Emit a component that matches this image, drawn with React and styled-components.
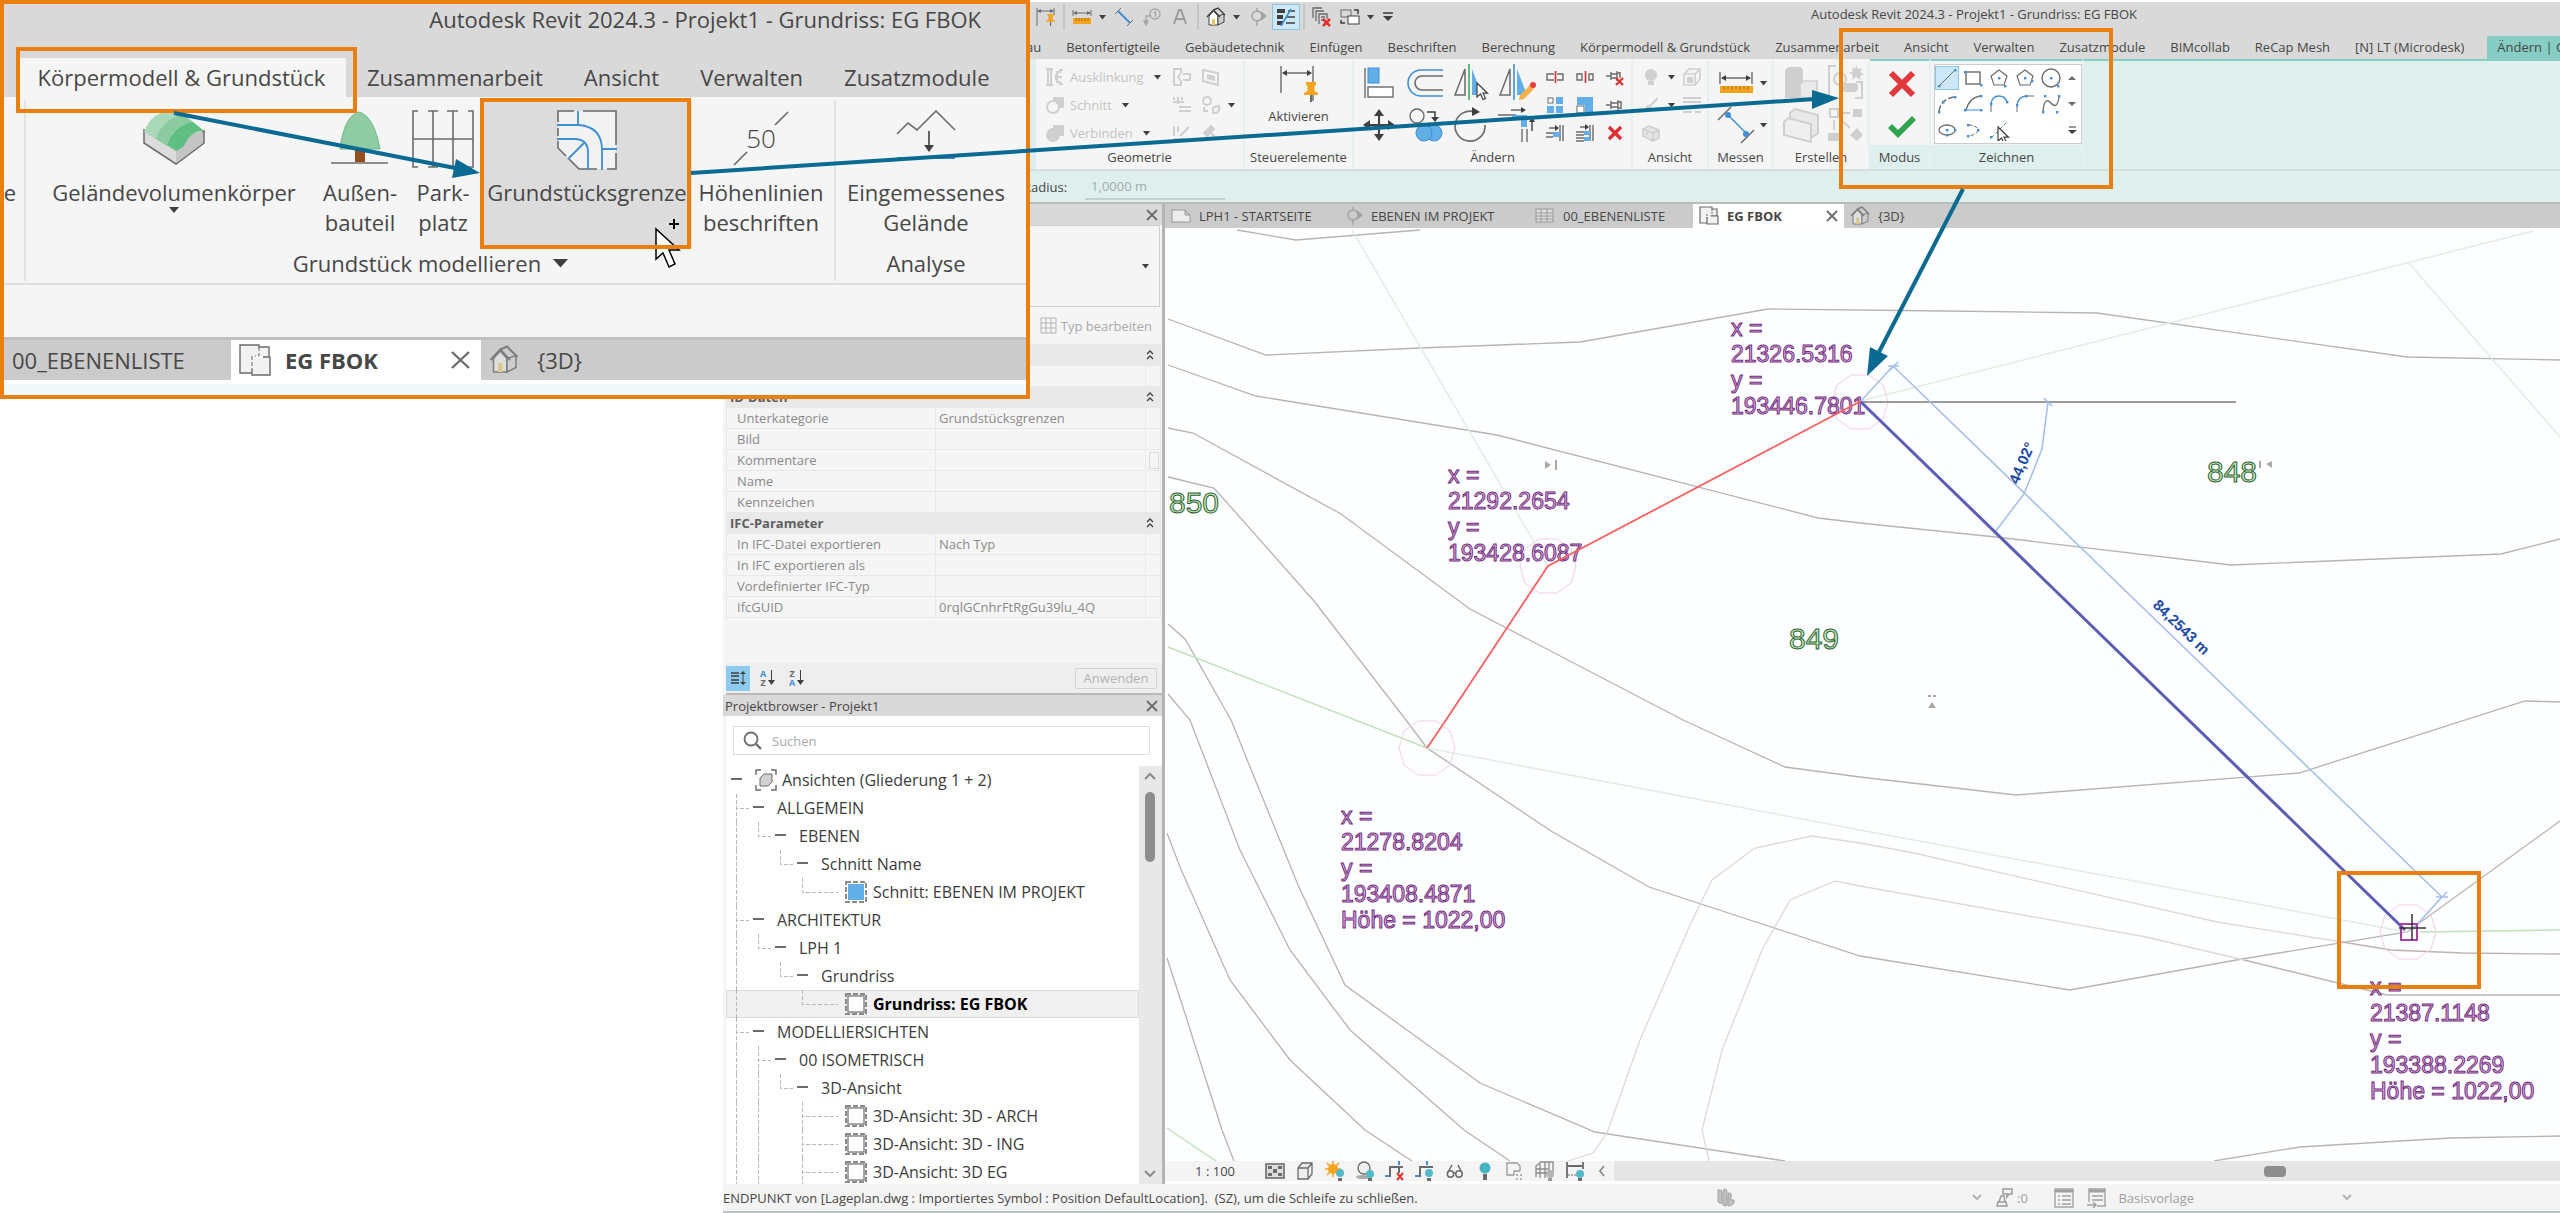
import styled, {createGlobalStyle, css} from 'styled-components';
import {useState} from 'react';

const theme = {
  orange: '#ea7f10',
  arrow: '#0b6a91',
  bar: '#d9d9d9',
  panel: '#f5f5f5',
  mint: '#dfefed',
  teal: '#86cdc3',
  text: '#474747',
  muted: '#8a8a8a',
  blue: '#3f8fd6',
  fill: '#62aee6',
};

const GlobalStyle = createGlobalStyle`
  * {
    box-sizing: border-box;
  }

  body {
    margin: 0;
    background: white;
    overflow: hidden;
    font-family: 'Open Sans', 'Noto Sans', sans-serif;
    font-size: 13px;
    color: ${theme.text};
  }

  button, input, select {
    font: inherit;
    color: inherit;
    border: none;
    background: none;
    padding: 0;
    margin: 0;
  }
`;

/* ---------- icons ---------- */

const g = '#6b6b6b';
const k = '#3f3f3f';
const f = '#cfcfcf';
const b = theme.blue;
const bf = theme.fill;

const Pin = ({x, y}) => (
  <g transform={`translate(${x} ${y})`}>
    <path d="M1 0H11V3L9.500 4V9L13 11V13H-1V11L2.500 9V4L1 3Z" fill="#f4a31c"/>
    <path d="M6 13V20" stroke={g} strokeWidth="2"/>
  </g>
);

const Dot = ({x, y}) => <rect x={x - 1} y={y - 1} width="2.400" height="2.400" fill={b}/>;

const Cursor = ({x, y}) => (
  <path transform={`translate(${x} ${y})`} d="M0 0V14L3.500 11L6 16.500L8.500 15.500L6 10.200H10.500Z" fill="white" stroke={k} strokeWidth="1.200"/>
);

const icons = {
  pinDim: [20, 20, <><path d="M1 1V19M18 1V8M2 4H17" stroke={g} fill="none"/><path d="M1 4L5 2V6ZM18 4L14 2V6Z" fill={g}/><g transform="translate(11 7) scale(.6)"><Pin x={0} y={0}/></g></>],
  ruler: [20, 16, <><path d="M1 1V7M19 1V7M2 4H18" stroke={g} fill="none"/><path d="M1 4L5 2V6ZM19 4L15 2V6Z" fill={g}/><rect x="1" y="9" width="18" height="6" fill="#f4a31c"/><path d="M4 9V12M7 9V12M10 9V12M13 9V12M16 9V12" stroke="#a8690c"/></>],
  diag: [20, 20, <><path d="M1 7L7 1M13 19L19 13" stroke={g}/><path d="M4 4L16 16" stroke={b} strokeWidth="2"/></>],
  tag: [18, 18, <g fill="none" stroke="#a6a6a6" strokeWidth="1.300"><circle cx="12" cy="6" r="5"/><path d="M11 5L12.500 4V9M7 8H3V13"/><path d="M1 13H5L3 17Z" fill="#a6a6a6"/></g>],
  letter: [16, 16, <path d="M2 15L7 1H9L14 15M4 10H12" fill="none" stroke="#9b9b9b" strokeWidth="2"/>],
  house: [20, 20, <><path d="M3 9V18H12V9L7.500 4Z" fill="white" stroke={k}/><path d="M12 18L18 15V7L12 9Z" fill="#cfcfcf" stroke={k}/><path d="M1 10L7.500 3L14 10M7.500 3L12 1L19 8" fill="none" stroke={k} strokeWidth="1.400"/><rect x="6" y="12" width="3" height="6" fill="#e9c75b"/></>],
  houseGrey: [20, 20, <g opacity=".55"><path d="M3 9V18H12V9L7.500 4Z" fill="#eee" stroke={k}/><path d="M12 18L18 15V7L12 9Z" fill="#cfcfcf" stroke={k}/><path d="M1 10L7.500 3L14 10M7.500 3L12 1L19 8" fill="none" stroke={k} strokeWidth="1.400"/><rect x="6" y="12" width="3" height="6" fill="#e9c75b"/></g>],
  section: [18, 18, <g fill="none" stroke="#a0a0a0" strokeWidth="1.300"><circle cx="8" cy="8" r="5"/><path d="M8 0V3M8 13V18"/><path d="M12 4L17 8L12 12" fill="#a0a0a0"/></g>],
  thinLines: [20, 18, <><path d="M1 3H9M1 9H7M1 15H7" stroke={k} strokeWidth="4"/><path d="M12 3H19M11 9H19M10 15H19" stroke={k} strokeWidth="1.400"/><path d="M5 18L15 1" stroke={b} strokeWidth="1.600"/></>],
  closeViews: [20, 20, <><path d="M1 11V1H10M4 14V4H12M7 17V7H15V12M9 10H13M9 13H11" fill="none" stroke={g} strokeWidth="1.300"/><path d="M11 12L18 19M18 12L11 19" stroke="#e03131" strokeWidth="2.600"/></>],
  switchViews: [20, 18, <><rect x="1" y="2" width="10" height="7" fill="none" stroke={g}/><rect x="8" y="8" width="11" height="8" fill="white" stroke={k}/><path d="M14 2H18V6M1 12V15H5" fill="none" stroke={k} strokeWidth="1.500"/></>],
  cope: [20, 18, <path d="M1 1H8M1 17H8M3 1V17M6 1V17M18 2H15V4H12V7H10M18 16H15V14H12V11H10M10 9H17" fill="none" stroke={f} strokeWidth="2"/>],
  cut: [20, 18, <><rect x="8" y="1" width="11" height="11" fill={f}/><circle cx="8" cy="11" r="6" fill={theme.panel} stroke={f} strokeWidth="2"/></>],
  join: [20, 18, <><rect x="8" y="1" width="11" height="11" fill={f}/><circle cx="8" cy="11" r="7" fill={f}/></>],
  joinWall: [20, 18, <path d="M2 1H9V5L6 9L9 13V17H2ZM11 6H18V12H11" fill="none" stroke={f} strokeWidth="2"/>],
  face: [20, 18, <><path d="M2 2L17 5V17L2 13Z" fill="none" stroke={f} strokeWidth="2"/><path d="M6 6L14 8V13L6 11Z" fill={f}/></>],
  beam: [20, 18, <path d="M2 1V4M6 1V8M10 1V4M1 6H12M7 11H19M7 15H19" fill="none" stroke={f} strokeWidth="2"/>],
  split: [20, 18, <g fill="none" stroke={f} strokeWidth="2"><circle cx="6" cy="5" r="4"/><path d="M3 11V15H7M12 17V12Q14 10 18 10Q19 16 15 17Z"/></g>],
  paint: [20, 18, <path d="M2 2V12M6 2V8M2 15H14M8 12L17 3" fill="none" stroke={f} strokeWidth="2"/>],
  hammer: [20, 18, <path d="M3 9L10 2L13 5L6 12ZM9 8L17 16" fill={f} stroke={f} strokeWidth="2"/>],
  activate: [38, 38, <><path d="M1 1V28M33 1V36M3 8H31" stroke={g} fill="none" strokeWidth="1.400"/><path d="M2 8L7 5V11ZM32 8L27 5V11Z" fill={k}/><Pin x={25} y={17}/></>],
  align: [32, 32, <><path d="M2 1V31" stroke={g} strokeWidth="1.400"/><rect x="5" y="1" width="11" height="15" fill={bf} stroke={b}/><rect x="5" y="20" width="25" height="10" fill="white" stroke={g} strokeWidth="1.400"/></>],
  offset: [38, 32, <><path d="M37 3H15A13 13 0 0 0 15 29H37" fill="none" stroke={b} strokeWidth="1.600"/><path d="M37 9H16A7 7 0 0 0 16 23H37" fill="none" stroke={g} strokeWidth="1.600"/></>],
  mirrorPick: [36, 38, <><path d="M2 31L12 5V31Z" fill="none" stroke={g} strokeWidth="1.500"/><path d="M19 5L29 31H19Z" fill={bf}/><path d="M16 0V36" stroke="#3daf5b" strokeWidth="1.600"/><Cursor x={24} y={19}/></>],
  mirrorDraw: [38, 38, <><path d="M2 31L12 5V31Z" fill="none" stroke={g} strokeWidth="1.500"/><path d="M19 5L29 31H19Z" fill={bf}/><path d="M16 0V36" stroke={b} strokeWidth="1.600"/><path d="M22 31L32 21L36 25L26 35L21 36Z" fill="#f3b04b"/><circle cx="35" cy="21" r="3" fill="#e23b3b"/></>],
  move: [32, 32, <><path d="M3 16H29M16 3V29" stroke={k} strokeWidth="2"/><path d="M16 0L21 7H11ZM16 32L21 25H11ZM0 16L7 11V21ZM32 16L25 11V21Z" fill={k}/></>],
  copy: [36, 34, <><circle cx="10" cy="8" r="7" fill="none" stroke={g} strokeWidth="1.400"/><path d="M20 4H28V10" fill="none" stroke={k} strokeWidth="1.500"/><path d="M24 9H32L28 14Z" fill={k}/><circle cx="27" cy="25" r="8" fill={bf} stroke={b}/><circle cx="17" cy="25" r="8" fill={bf} stroke={b}/></>],
  rotate: [36, 36, <><path d="M22 5A15 15 0 1 0 32 18" fill="none" stroke={g} strokeWidth="1.600"/><path d="M19 0L27 5L19 9Z" fill={k}/></>],
  trim: [38, 36, <><path d="M0 8H18M13 3H25" stroke={g} strokeWidth="1.400"/><path d="M14 8H29V20H23V12H14Z" fill={bf}/><path d="M24 22V35M29 22V35" stroke={g} strokeWidth="1.400"/><path d="M23 0L28 3L23 6Z" fill={k}/><path d="M34 24V12" stroke={k} strokeWidth="1.400"/><path d="M31 15L34 10L37 15Z" fill={k}/></>],
  splitEl: [20, 18, <><path d="M9 6H2V12H9M12 6H18V12H12" fill="none" stroke={g} strokeWidth="1.400"/><path d="M10.500 3V15" stroke="#e03131" strokeWidth="1.600"/></>],
  splitGap: [20, 18, <><path d="M2 6H7V12H2ZM14 6H18V12H14Z" fill="none" stroke={g} strokeWidth="1.400"/><path d="M10.500 3V15" stroke="#e03131" strokeWidth="1.600"/></>],
  unpin: [20, 18, <><path d="M1 8H6M6 4V12M6 6H12M6 10H12M12 3V13M15 4V10M12 5H15" fill="none" stroke={g} strokeWidth="1.400"/><path d="M11 10L18 17M18 10L11 17" stroke="#e03131" strokeWidth="2.200"/></>],
  array: [18, 18, <><rect x="2" y="2" width="5" height="5" fill="white" stroke={g}/><path d="M10 1H17V8H10ZM1 10H8V17H1ZM10 10H17V17H10Z" fill={bf}/></>],
  scale: [18, 18, <><path d="M1 1H17V17H9V9H1Z" fill={bf}/><rect x="1" y="10" width="7" height="7" fill="white" stroke={g}/></>],
  pin: [20, 18, <path d="M1 9H6M6 5V13M6 7H13M6 11H13M13 4V14M16 5V13M13 6H16M13 12H16" fill="none" stroke={g} strokeWidth="1.400"/>],
  trimOne: [20, 18, <><path d="M15 1V17M18 1V17M1 9H8M1 13H8M4 4H12" stroke={g} strokeWidth="1.400"/><rect x="8" y="8" width="7" height="5" fill={bf}/><path d="M10 1L14 4L10 7Z" fill={k}/></>],
  trimMany: [20, 18, <><path d="M15 1V17M18 1V17M1 8H9M1 11H9M1 14H9M1 17H9M5 3H12" stroke={g} strokeWidth="1.400"/><path d="M9 7H15V11H9ZM9 13H15V17H9Z" fill={bf}/><path d="M10 0L14 3L10 6Z" fill={k}/></>],
  remove: [18, 18, <path d="M3 3L15 15M15 3L3 15" stroke="#df2f36" strokeWidth="3.400"/>],
  bulb: [18, 18, <><circle cx="9" cy="7" r="6" fill={f}/><rect x="6" y="13" width="6" height="4" fill={f}/></>],
  box: [20, 18, <><path d="M2 6L7 1H18V11L13 17H2ZM2 6H13V17M13 6L18 1" fill="none" stroke={f} strokeWidth="1.600"/><rect x="5" y="9" width="6" height="6" fill={f}/></>],
  brush: [18, 18, <><path d="M16 2L8 10" stroke={f} strokeWidth="2"/><path d="M2 15L6 8L10 12Z" fill={f}/></>],
  lines: [20, 18, <path d="M1 2H19M1 6H19M1 11H19M1 16H10M13 16H19" stroke={f} strokeWidth="2"/>],
  brick: [20, 18, <path d="M2 5L8 2L18 6V14L12 17L2 12ZM2 5L12 9V17M12 9L18 6M6 8V11" fill="#e4e4e4" stroke={f} strokeWidth="1.600"/>],
  measure: [36, 22, <><path d="M2 0V12M34 0V12M4 6H32" stroke={g} strokeWidth="1.400"/><path d="M3 6L8 3V9ZM33 6L28 3V9Z" fill={k}/><rect x="2" y="14" width="33" height="7" fill="#f4a31c"/><path d="M6 14V18M10 14V17M14 14V18M18 14V17M22 14V18M26 14V17M30 14V18" stroke="#a8690c"/></>],
  dimension: [38, 38, <><path d="M1 14L14 1M24 37L37 24" stroke={g} strokeWidth="1.500"/><path d="M11 9L30 28" stroke={b} strokeWidth="1.500"/><circle cx="11" cy="9" r="3" fill={b}/><circle cx="29" cy="28" r="3" fill={b}/></>],
  group: [36, 34, <><path d="M2 4L6 1H18L20 4V32H2Z" fill={f}/><path d="M17 18L20 15H34V28L30 32H17Z" fill="#e9e9e9" stroke={f} strokeWidth="1.600"/></>],
  assembly: [38, 36, <><path d="M8 12V6L13 2L36 8V26L31 30Z" fill="#e9e9e9" stroke={f} strokeWidth="2"/><path d="M2 15L6 11L29 17V35L2 28Z" fill="#efefef" stroke={f} strokeWidth="2"/></>],
  part: [36, 36, <><path d="M8 1H1V33H8M28 17H34V33H27" fill="none" stroke={f} strokeWidth="2"/><circle cx="12" cy="14" r="6" fill="none" stroke={f} strokeWidth="2"/><rect x="14" y="18" width="16" height="9" rx="4" fill={f}/><path d="M28 0L30 4L34 3L32 7L36 9L32 11L33 15L28 12L24 15L25 10L21 8L25 6L24 2L27 4Z" fill={f}/></>],
  similar: [36, 34, <><path d="M2 1H10V9H2Z" fill="none" stroke={f} strokeWidth="2"/><path d="M25 1H34V9H25ZM0 25H12V33H0ZM29 20L35 27L29 33L22 27Z" fill={f}/><path d="M13 5H22M6 12V22M13 12L22 20" stroke={f} strokeWidth="2"/></>],
  cancel: [30, 30, <path d="M4 4L26 26M26 4L4 26" stroke="#e2373b" strokeWidth="6"/>],
  finish: [30, 24, <path d="M3 12L11 20L27 4" fill="none" stroke="#2da44e" strokeWidth="5.500"/>],
  gLine: [22, 22, <><path d="M4 18L18 4" stroke={g}/><Dot x={3} y={19}/><Dot x={19} y={3}/></>],
  gRect: [22, 22, <><rect x="4" y="5" width="14" height="12" fill="none" stroke={g} strokeWidth="1.400"/><Dot x={3} y={5}/><Dot x={19} y={18}/></>],
  gPoly: [22, 22, <><path d="M11 3L19 9L16 18H6L3 9Z" fill="none" stroke={g} strokeWidth="1.200"/><Dot x={11} y={11}/><Dot x={17} y={19}/></>],
  gPolyOut: [22, 22, <><path d="M11 3L19 9L16 18H6L3 9Z" fill="none" stroke={g} strokeWidth="1.200"/><Dot x={11} y={11}/><Dot x={18} y={14}/></>],
  gCircle: [22, 22, <><circle cx="11" cy="11" r="9" fill="none" stroke={g} strokeWidth="1.400"/><Dot x={11} y={11}/><Dot x={18} y={19}/></>],
  gArc1: [22, 22, <><path d="M3 18Q5 6 18 4" fill="none" stroke={g} strokeWidth="1.400" strokeDasharray="6 2"/><Dot x={3} y={19}/><Dot x={7} y={9}/><Dot x={19} y={4}/></>],
  gArc2: [22, 22, <><path d="M4 17Q7 5 18 3" fill="none" stroke={g} strokeWidth="1.400"/><path d="M4 17H18" stroke={b}/><Dot x={3} y={17}/><Dot x={19} y={3}/><Dot x={19} y={17}/></>],
  gArc3: [22, 22, <><path d="M3 19V11" stroke={g}/><path d="M3 11Q4 3 11 3Q17 3 19 9" fill="none" stroke={b} strokeWidth="1.400"/><Dot x={3} y={11}/><Dot x={19} y={9}/></>],
  gArc4: [22, 22, <><path d="M3 19V12M12 3H20" stroke={g}/><path d="M3 12Q4 4 12 3" fill="none" stroke={b} strokeWidth="1.400"/><Dot x={3} y={12}/><Dot x={12} y={3}/></>],
  gSpline: [22, 22, <><path d="M3 19Q4 4 10 9Q17 18 19 4" fill="none" stroke={g} strokeWidth="1.300"/><Dot x={3} y={19}/><Dot x={5} y={3}/><Dot x={19} y={3}/><Dot x={17} y={19}/></>],
  gEllipse: [22, 22, <><ellipse cx="11" cy="11" rx="8" ry="5" fill="none" stroke={g} strokeWidth="1.300"/><Dot x={11} y={11}/><Dot x={19} y={11}/><Dot x={11} y={16}/></>],
  gHalf: [22, 22, <><path d="M6 6Q15 6 16 11Q15 16 6 17" fill="none" stroke={g} strokeDasharray="4 2"/><Dot x={6} y={6}/><Dot x={16} y={11}/><Dot x={6} y={17}/></>],
  gPick: [22, 22, <><path d="M3 19L19 3" stroke="#3daf5b" strokeDasharray="4 2"/><Dot x={3} y={18}/><Cursor x={10} y={8}/></>],
  galUp: [10, 6, <path d="M1 5L5 1L9 5Z" fill={g}/>],
  galDown: [10, 6, <path d="M1 1L5 5L9 1Z" fill={g}/>],
  galMore: [10, 9, <><path d="M2 1H9" stroke={g} strokeWidth="1.400"/><path d="M1 4H10L5 8Z" fill={k}/></>],
  drop: [8, 5, <path d="M0 0H7L3.500 4.500Z" fill={k}/>],
  dropMid: [10, 6, <path d="M0 0H10L5 6Z" fill={k}/>],
  dropBig: [16, 9, <path d="M0 0H15L7.500 8.500Z" fill={k}/>],
  more: [12, 10, <><path d="M1 1H11" stroke={k} strokeWidth="1.600"/><path d="M1 4H11L6 9Z" fill={k}/></>],
  sheet: [20, 14, <path d="M1 1H14L19 6V13H1ZM14 1V6H19" fill="#ededed" stroke="#9a9a9a"/>],
  schedule: [20, 16, <><rect x="1" y="1" width="17" height="13" fill="#ddd" stroke="#9a9a9a"/><path d="M1 5H18M1 8H18M1 11H18M6 1V14M12 1V14" stroke="#9a9a9a"/></>],
  plan: [20, 20, <><path d="M1 1H13V3H18V10H12V17H1Z" fill="#f2f2f2" stroke={g} strokeWidth="1.200"/><path d="M8 11V18H19V10H12" fill="#f2f2f2" stroke={g} strokeWidth="1.200"/><path d="M13 3V9M8 8V12" stroke={g} strokeDasharray="2 1"/></>],
  planBig: [32, 32, <><path d="M1 1H20V3H30V12H16V29H1Z" fill="#f2f2f2"/><path d="M13 14H31V31H13Z" fill="#f2f2f2"/><path d="M13 29H1V1H20V3H30V12M24 13H31V31H13V25" fill="none" stroke={g} strokeWidth="1.400"/><path d="M20 3V12H16M13 12V25" fill="none" stroke={g} strokeDasharray="4 2"/></>],
  close: [12, 12, <path d="M1 1L11 11M11 1L1 11" stroke={g} strokeWidth="1.800"/>],
  closeBig: [20, 18, <path d="M1 1L18 17M18 1L1 17" stroke={g} strokeWidth="2.400"/>],
  typeEdit: [18, 18, <path d="M1 1H16V16H1ZM1 6H16M1 11H16M6 1V16M11 1V16" fill="none" stroke="#b5b5b5"/>],
  chevrons: [8, 12, <path d="M1 5L4 2L7 5M1 10L4 7L7 10" fill="none" stroke={k} strokeWidth="1.300"/>],
  sortGroup: [16, 16, <><path d="M1 3H9M1 6H9M1 10H9M1 13H9" stroke={k} strokeWidth="1.300"/><path d="M13 2V14" stroke={k}/><path d="M10 4L13 1L16 4ZM10 12L13 15L16 12Z" fill={k}/></>],
  search: [20, 20, <><circle cx="8" cy="8" r="6.500" fill="none" stroke={g} strokeWidth="1.800"/><path d="M13 13L18 18" stroke={g} strokeWidth="2.400"/></>],
  views: [22, 22, <><path d="M1 6V1H6M16 1H21V6M21 16V21H16M6 21H1V16" fill="none" stroke={g} strokeWidth="1.400"/><path d="M5 9L9 5H17V13L13 17H5Z" fill="#d0d0d0" stroke={g}/></>],
  viewBox: [24, 24, <><rect x="2" y="2" width="20" height="20" fill="none" stroke="#8a8a8a" strokeWidth="2" strokeDasharray="5 2"/><rect x="4" y="4" width="16" height="16" fill="white" stroke="#8a8a8a" strokeWidth="1.500"/></>],
  viewBlue: [24, 24, <><rect x="2" y="2" width="20" height="20" fill="none" stroke="#8a8a8a" strokeWidth="2" strokeDasharray="5 2"/><rect x="4" y="4" width="16" height="16" fill={bf}/></>],
  detail: [20, 16, <><rect x="1" y="1" width="18" height="14" fill="#ddd" stroke={g} strokeWidth="1.600"/><path d="M3 3H7V6H3ZM13 3H17V6H13ZM3 10H7V13H3ZM13 10H17V13H13ZM8 6H12V10H8Z" fill={g}/></>],
  style: [18, 18, <path d="M2 6L6 1H16V12L12 17H2ZM2 6H12V17M12 6L16 1" fill="#eee" stroke={g} strokeWidth="1.300"/>],
  sun: [20, 20, <><path d="M8 0V16M0 8H16M2 2L14 14M14 2L2 14" stroke="#f4a31c" strokeWidth="1.500"/><circle cx="8" cy="8" r="5" fill="#f4a31c"/><circle cx="15" cy="12" r="4" fill="#52b9c9"/><path d="M13 17H17V20H13Z" fill={g}/></>],
  shadow: [20, 20, <><circle cx="9" cy="7" r="6" fill="#eee" stroke={g} strokeWidth="1.300"/><ellipse cx="8" cy="16" rx="7" ry="2" fill="#aaa"/><circle cx="15" cy="13" r="4" fill="#52b9c9"/><path d="M13 17H17V20H13Z" fill={g}/></>],
  cropOff: [20, 20, <><path d="M0 15H4M14 0V4" stroke={b} strokeWidth="2"/><path d="M5 16V6H18M14 6V12" fill="none" stroke={g} strokeWidth="2"/><path d="M12 12L18 19M18 12L12 19" stroke="#e03131" strokeWidth="2"/></>],
  crop: [20, 20, <><path d="M0 15H4M12 0V4" stroke={b} strokeWidth="2"/><path d="M5 16V6H18" fill="none" stroke={g} strokeWidth="2"/><circle cx="14" cy="12" r="4" fill="#52b9c9"/><path d="M12 17H16V20H12Z" fill={g}/></>],
  glasses: [18, 18, <g fill="none" stroke={g} strokeWidth="1.500"><circle cx="4.500" cy="12" r="3.200"/><circle cx="13" cy="12" r="3.200"/><path d="M1.500 11L6 3M16 11L12 3M8 11H10"/></g>],
  reveal: [14, 20, <><circle cx="7" cy="7" r="5.500" fill="#45b2c5"/><path d="M5 13H9V19H5Z" fill={g}/></>],
  temp: [18, 18, <><path d="M8 13H1V1H11L14 4V9M8 13V9H14" fill="none" stroke="#9a9a9a" strokeWidth="1.300"/><path d="M10 13H17M10 17H17" stroke="#9a9a9a" strokeWidth="1.500" strokeDasharray="2 2"/></>],
  analytic: [20, 20, <><path d="M1 16V5L6 1H18V12M1 8H13M1 12H13M5 3V17M10 1V17M14 2V12" fill="none" stroke="#8a8a8a" strokeWidth="1.300"/><circle cx="15" cy="13" r="4" fill="#b4b4b4"/><path d="M13 17H17V20H13Z" fill="#9a9a9a"/></>],
  constraint: [20, 20, <><path d="M2 1V17M18 1V8M3 5H17" stroke={g} strokeWidth="1.800"/><path d="M3 14H11" stroke={g} strokeDasharray="2 1"/><circle cx="15" cy="13" r="4" fill="#52b9c9"/><path d="M13 17H17V20H13Z" fill={g}/></>],
  left: [8, 12, <path d="M6 1L2 6L6 11" fill="none" stroke="#8a8a8a" strokeWidth="1.800"/>],
  arrowUp: [14, 9, <path d="M2 7L7 2L12 7" fill="none" stroke="#8a8a8a" strokeWidth="2"/>],
  arrowDown: [14, 9, <path d="M2 2L7 7L12 2" fill="none" stroke="#8a8a8a" strokeWidth="2"/>],
  chevron: [10, 7, <path d="M1 1L5 5L9 1" fill="none" stroke="#b4b4b4" strokeWidth="2"/>],
  hand: [20, 20, <path d="M3 2H5Q7 2 7 4V15Q5 16 3 14ZM8 4Q8 1 10 1Q12 1 12 4V17Q10 19 8 17ZM13 7Q13 4 15 5Q17 5 16 9V12H19V15Q17 18 13 18Z" fill="#c2c2c2" stroke="#a2a2a2"/>],
  press: [18, 20, <path d="M7 1H16V6H13L11 9V6H7ZM1 18H11L10 14H2ZM3 14L5 8H8L9 14" fill="none" stroke="#9b9b9b" strokeWidth="1.500"/>],
  list: [20, 20, <><rect x="1" y="1" width="18" height="18" fill="none" stroke="#a0a0a0" strokeWidth="1.400"/><path d="M1 3H19" stroke="#a0a0a0" strokeWidth="3"/><path d="M4 8H6M8 8H17M4 12H6M8 12H17M4 16H6M8 16H17" stroke="#a0a0a0" strokeWidth="1.500"/></>],
  listPin: [20, 20, <><path d="M3 14V1H19V18H11" fill="none" stroke="#a0a0a0" strokeWidth="1.400"/><path d="M3 3H19" stroke="#a0a0a0" strokeWidth="3"/><path d="M6 8H17M6 12H17M1 17H9M7 14L10 17L7 20" fill="none" stroke="#a0a0a0" strokeWidth="1.500"/></>],
  toposolid: [62, 56, <>
    <path d="M1 20L1 33L33 54L61 33V21L33 40Z" fill="#dcdcdc" stroke={g} strokeWidth="1.500"/>
    <path d="M33 53V40Q38 40 43 31Q48 21 60 22V33Z" fill="#c4c4c4"/>
    <path d="M1 22Q8 2 28 1Q34 0 40 4L61 21Q48 20 41 34Q37 41 33 41Z" fill="#a9d9b8"/>
    <path d="M13 29Q20 8 40 5L50 12Q30 14 24 36Z" fill="#8ccba0"/>
    <path d="M24 35Q32 14 50 12L61 21Q48 20 41 36L34 41Z" fill="#5fbf83"/>
  </>],
  tree: [58, 54, <><path d="M9 39Q13 6 28 2Q43 6 49 39Z" fill="#8fcca3" stroke="#6fb98a"/><rect x="24" y="39" width="10" height="13" fill="#94501f"/><path d="M0 53H57" stroke={g} strokeWidth="1.500"/></>],
  parking: [62, 58, <path d="M6 1H1V57H6M16 1H26M21 1V57M16 57H26M35 1H46M41 1V57M35 57H46M56 1H61V57H56M1 29H61" fill="none" stroke={g} strokeWidth="1.600"/>],
  boundary: [60, 60, <>
    <path d="M1 1H59V59H22L1 38Z" fill="#f2f2f2"/>
    <path d="M1 12V1H17M26 1H59V35M59 43V59H50M40 59H22L12 49M9 46L1 38V31M1 18V26" fill="none" stroke={g} strokeWidth="1.600"/>
    <path d="M0 15H22Q45 17 45 40V60M0 29H19Q31 30 31 42V60M21 1V15M45 39H60M11 49L27 33" fill="none" stroke={b} strokeWidth="1.800"/>
  </>],
  surveyed: [60, 50, <><path d="M1 24L12 13L21 20L40 1L59 20" fill="none" stroke={g} strokeWidth="1.600"/><path d="M33 21V36" stroke={k} strokeWidth="1.600"/><path d="M28 35H38L33 42Z" fill={k}/><path d="M1 48H59" stroke={b} strokeWidth="2"/></>],
};

const Icon = ({name}) => {
  const [w, h, shape] = icons[name];
  return <svg width={w} height={h} viewBox={`0 0 ${w} ${h}`} aria-hidden="true">{shape}</svg>;
};

/* ---------- shared parts ---------- */

const row = css`
  display: flex;
  align-items: center;
`;

const Page = styled.div`
  position: relative;
  height: 100vh;
  overflow: hidden;
`;

const Window = styled.main`
  margin-left: 723px;
  padding-top: 2px;
  height: 100%;
  display: flex;
  flex-direction: column;
  overflow: hidden;
`;

const IconButton = styled.button`
  ${row};
  justify-content: center;
  flex: none;
  width: ${({$w}) => $w || 28}px;
  height: ${({$h}) => $h || 26}px;
  background: ${({$on}) => $on ? '#cce8f8' : 'transparent'};
  border: ${({$on}) => $on ? '1px solid #8cc5e6' : 'none'};

  svg {
    flex: none;
  }
`;

/* ---------- title bar and ribbon tabs ---------- */

const TitleBar = styled.header`
  ${row};
  flex: none;
  height: 30px;
  padding-left: 309px;
  background: ${theme.bar};
`;

const Divider = styled.span`
  width: 2px;
  height: 26px;
  margin: 0 3px;
  background: #c6c6c6;
`;

const WindowTitle = styled.h1`
  flex: 1;
  margin: 0;
  padding: 0 5px 6px 413px;
  font-size: 13px;
  font-weight: normal;
  white-space: nowrap;
`;

const TabStrip = styled.nav`
  ${row};
  flex: none;
  height: 27px;
  padding-left: 295px;
  gap: 25px;
  background: ${theme.bar};
`;

const Tab = styled.button`
  flex: none;
  height: 27px;
  padding-top: 2px;
  white-space: nowrap;

  ${({$active}) => $active && css`
    margin: 4px 0 0 -2px;
    height: 23px;
    padding: 0 10px 2px;
    background: ${theme.teal};
  `};
`;

const tabs = ['bau', 'Betonfertigteile', 'Gebäudetechnik', 'Einfügen', 'Beschriften', 'Berechnung',
  'Körpermodell & Grundstück', 'Zusammenarbeit', 'Ansicht', 'Verwalten', 'Zusatzmodule', 'BIMcollab',
  'ReCap Mesh', '[N] LT (Microdesk)', 'Ändern | Grundstück'];

/* ---------- ribbon ---------- */

const RibbonBar = styled.section`
  display: flex;
  flex: none;
  height: 112px;
  padding-left: 313px;
  background: ${theme.mint};
  border-bottom: 2px solid #d2dfdd;
`;

const Group = styled.div`
  display: flex;
  flex-direction: column;
  flex: none;
  width: ${({$w}) => $w}px;
  background: ${theme.panel};
  border-right: 2px solid #e6eff1;
  border-top: 2px solid ${({$mode}) => $mode ? theme.teal : theme.panel};
`;

const GroupBody = styled.div`
  display: flex;
  height: 84px;
  padding: 2px 0 0 ${({$left}) => $left || 0}px;
`;

const GroupLabel = styled.div`
  ${row};
  justify-content: center;
  height: 24px;
  background: ${({$mode}) => $mode ? theme.mint : 'transparent'};
`;

const Column = styled.div`
  display: flex;
  flex-direction: column;
  flex: none;
  width: ${({$w}) => $w ? `${$w}px` : 'auto'};
`;

const Line = styled.div`
  ${row};
  flex: none;
  height: ${({$h}) => $h || 28}px;
`;

const DimButton = styled.button`
  ${row};
  flex: none;
  gap: 5px;
  height: 28px;
  color: #c4c4c4;

  svg:last-child {
    margin-left: 5px;
  }
`;

const TallButton = styled.button`
  display: flex;
  flex-direction: column;
  align-items: center;
  width: 107px;
  height: 64px;
  padding-top: 2px;
  gap: 4px;
`;

const Gallery = styled.div`
  display: grid;
  grid-template-columns: repeat(5, 26px) 16px;
  grid-template-rows: repeat(3, 26px);
  align-items: center;
  margin: 1px 0 0 3px;
  height: 80px;
  background: white;
  border: 1px solid #cdcdcd;
`;

const tools = [
  ['gLine', 'gRect', 'gPoly', 'gPolyOut', 'gCircle', 'galUp'],
  ['gArc1', 'gArc2', 'gArc3', 'gArc4', 'gSpline', 'galDown'],
  ['gEllipse', 'gHalf', 'gPick', null, null, 'galMore'],
];

const DrawGallery = () => {
  const [active, setActive] = useState('gLine');

  return (
    <Gallery>
      {tools.flat().map((name, i) => name ? (
        <IconButton
          key={name}
          $w={name.startsWith('gal') ? 14 : 24}
          $h={24}
          $on={name === active}
          aria-label={name}
          onClick={() => name.startsWith('gal') || setActive(name)}
        >
          <Icon name={name}/>
        </IconButton>
      ) : <span key={i}/>)}
    </Gallery>
  );
};

const IconLine = ({names, w, h}) => (
  <Line $h={h}>
    {names.map(name => (
      <IconButton key={name} $w={name === 'drop' ? 14 : w} $h={h} aria-label={name}><Icon name={name}/></IconButton>
    ))}
  </Line>
);

const RibbonEdge = styled.div`
  flex: 1;
  border-top: 2px solid ${theme.teal};
`;

const Ribbon = () => (
  <RibbonBar>
    <Group $w={209}>
      <GroupBody $left={9}>
        <Column $w={122}>
          <DimButton><Icon name="cope"/>Ausklinkung<Icon name="drop"/></DimButton>
          <DimButton><Icon name="cut"/>Schnitt<Icon name="drop"/></DimButton>
          <DimButton><Icon name="join"/>Verbinden<Icon name="drop"/></DimButton>
        </Column>
        <Column>
          <IconLine names={['joinWall', 'face']} w={29} h={28}/>
          <IconLine names={['beam', 'split', 'drop']} w={29} h={28}/>
          <IconLine names={['paint', 'hammer']} w={29} h={28}/>
        </Column>
      </GroupBody>
      <GroupLabel>Geometrie</GroupLabel>
    </Group>
    <Group $w={109}>
      <GroupBody><TallButton><Icon name="activate"/>Aktivieren</TallButton></GroupBody>
      <GroupLabel>Steuerelemente</GroupLabel>
    </Group>
    <Group $w={279}>
      <GroupBody $left={2}>
        <Column>
          <IconLine names={['align', 'offset', 'mirrorPick', 'mirrorDraw']} w={46} h={40}/>
          <IconLine names={['move', 'copy', 'rotate', 'trim']} w={46} h={44}/>
        </Column>
        <Column>
          <IconLine names={['splitEl', 'splitGap', 'unpin']} w={30} h={28}/>
          <IconLine names={['array', 'scale', 'pin']} w={30} h={28}/>
          <IconLine names={['trimOne', 'trimMany', 'remove']} w={30} h={28}/>
        </Column>
      </GroupBody>
      <GroupLabel>Ändern</GroupLabel>
    </Group>
    <Group $w={76}>
      <GroupBody $left={4}>
        <Column $w={42}>
          <IconLine names={['bulb', 'drop']} w={28} h={28}/>
          <IconLine names={['brush', 'drop']} w={28} h={28}/>
          <IconLine names={['brick']} w={28} h={28}/>
        </Column>
        <Column>
          <IconLine names={['box']} w={26} h={28}/>
          <IconLine names={['lines']} w={26} h={28}/>
        </Column>
      </GroupBody>
      <GroupLabel>Ansicht</GroupLabel>
    </Group>
    <Group $w={65}>
      <GroupBody $left={5}>
        <Column>
          <IconLine names={['measure', 'drop']} w={43} h={40}/>
          <IconLine names={['dimension', 'drop']} w={43} h={44}/>
        </Column>
      </GroupBody>
      <GroupLabel>Messen</GroupLabel>
    </Group>
    <Group $w={96}>
      <GroupBody $left={4}>
        <Column>
          <IconLine names={['group', 'part']} w={45} h={40}/>
          <IconLine names={['assembly', 'similar']} w={45} h={44}/>
        </Column>
      </GroupBody>
      <GroupLabel>Erstellen</GroupLabel>
    </Group>
    <Group $w={61} $mode>
      <GroupBody $left={9}>
        <Column>
          <IconLine names={['cancel']} w={46} h={42}/>
          <IconLine names={['finish']} w={46} h={42}/>
        </Column>
      </GroupBody>
      <GroupLabel $mode>Modus</GroupLabel>
    </Group>
    <Group $w={153} $mode>
      <GroupBody><DrawGallery/></GroupBody>
      <GroupLabel $mode>Zeichnen</GroupLabel>
    </Group>
    <RibbonEdge/>
  </RibbonBar>
);

const OptionsBar = styled.div`
  ${row};
  flex: none;
  height: 31px;
  padding-left: 300px;
  gap: 18px;
  background: ${theme.mint};

  input {
    width: 140px;
    height: 26px;
    padding-left: 6px;
    border-bottom: 2px solid #c5cfcd;
    color: #a3adab;
  }
`;

/* ---------- palettes ---------- */

const Work = styled.div`
  display: grid;
  grid-template-columns: 442px 1fr;
  flex: 1;
  min-height: 0;
  border-top: 2px solid #b6bcbb;
`;

const Side = styled.aside`
  display: flex;
  flex-direction: column;
  min-height: 0;
  padding-left: 3px;
  border-right: 3px solid #b4b4b4;
  background: ${theme.panel};
`;

const PaletteTitle = styled.div`
  ${row};
  justify-content: space-between;
  flex: none;
  height: 21px;
  padding: 0 3px 0 2px;
  margin-left: -3px;
  background: ${theme.bar};
`;

const TypeBox = styled.div`
  ${row};
  justify-content: flex-end;
  flex: none;
  height: 82px;
  padding-right: 9px;
  margin-right: 2px;
  border: 1px solid #cfcfcf;
`;

const TypeRow = styled.div`
  ${row};
  justify-content: flex-end;
  flex: none;
  height: 37px;
  padding-right: 10px;

  button {
    ${row};
    gap: 3px;
    color: #ababab;
  }
`;

const Props = styled.table`
  flex: none;
  width: 434px;
  border-collapse: collapse;
  table-layout: fixed;
  text-align: left;
  color: ${theme.muted};

  th, td {
    height: 21px;
    padding: 0 0 0 3px;
    line-height: 19px;
    border: 1px solid #e9e9e9;
    font-weight: normal;
  }

  tbody th {
    padding-left: 10px;
  }
`;

const SectionRow = styled.tr`
  background: #e9e9e9;

  th[colspan] {
    padding: 0 6px 0 3px;
    font-weight: bold;
    color: #5f5f5f;
  }

  div {
    ${row};
    justify-content: space-between;
  }
`;

const CellButton = styled.button`
  display: block;
  width: 10px;
  height: 17px;
  border: 1px solid #dcdcdc;
`;

const PaletteFooter = styled.div`
  ${row};
  flex: none;
  height: 30px;
  margin-top: auto;
  padding-right: 5px;
  gap: 6px;
  background: #eeeeee;
`;

const GroupButton = styled(IconButton)`
  background: #8ccbee;
  border: none;
`;

const Apply = styled.button`
  width: 82px;
  height: 21px;
  margin-left: auto;
  border: 1px solid #d3d3d3;
  border-radius: 2px;
  color: #b3b3b3;
`;

const SortText = styled.span`
  ${row};
  gap: 2px;
  font-size: 9px;
  font-weight: bold;
  line-height: 9px;
  color: ${g};

  i {
    font-style: normal;
    display: block;
  }

  i:${({$first}) => $first}-child {
    color: ${b};
  }
`;

const SortButton = ({top, bottom, first}) => (
  <IconButton $w={23} $h={24} aria-label={`${top}${bottom}`}>
    <SortText $first={first}>
      <span><i>{top}</i><i>{bottom}</i></span>
      <svg width="7" height="16"><path d="M3.500 0V12" stroke={k}/><path d="M0 10H7L3.500 15Z" fill={k}/></svg>
    </SortText>
  </IconButton>
);

const Properties = styled.section`
  display: flex;
  flex-direction: column;
  flex: none;
  height: 489px;
`;

const Browser = styled.section`
  display: flex;
  flex-direction: column;
  flex: 1;
  min-height: 0;
  background: white;
  border-top: 2px solid #b9b9b9;
`;

const SearchBox = styled.label`
  ${row};
  flex: none;
  gap: 9px;
  height: 29px;
  margin: 10px 12px 11px 7px;
  padding-left: 9px;
  border: 1px solid #dedede;

  input {
    flex: 1;
  }

  input::placeholder {
    color: #a8a8a8;
    opacity: 1;
  }
`;

const TreeArea = styled.div`
  display: grid;
  grid-template-columns: 1fr 23px;
  flex: 1;
  min-height: 0;
`;

const Tree = styled.ul`
  margin: 0;
  padding: 0;
  list-style: none;
  overflow: hidden;
  font-size: 16px;
  color: #3c3c3c;
`;

const TreeItem = styled.li`
  ${row};
  height: 28px;
  border: 1px solid ${({$current}) => $current ? '#dcdcdc' : 'transparent'};
  background: ${({$current}) => $current ? '#f0f0f0' : 'transparent'};
  color: ${({$current}) => $current ? 'black' : 'inherit'};
  font-weight: ${({$current}) => $current ? 'bold' : 'normal'};
  white-space: nowrap;
`;

const Guide = styled.svg`
  flex: none;
  height: 28px;
  width: ${({$w}) => $w}px;
`;

const VScroll = styled.div`
  display: flex;
  flex-direction: column;
  align-items: center;
  justify-content: space-between;
  background: #e8e8e8;
  padding: 6px 2px 6px 0;
`;

const Thumb = styled.span`
  width: 10px;
  height: 70px;
  margin: 11px 0 auto;
  border-radius: 5px;
  background: #8d8d8d;
`;

const propRows = [
  {section: ' '},
  {name: ''},
  {section: 'ID-Daten'},
  {name: 'Unterkategorie', value: 'Grundstücksgrenzen'},
  {name: 'Bild'},
  {name: 'Kommentare', button: true},
  {name: 'Name'},
  {name: 'Kennzeichen'},
  {section: 'IFC-Parameter'},
  {name: 'In IFC-Datei exportieren', value: 'Nach Typ'},
  {name: 'In IFC exportieren als'},
  {name: 'Vordefinierter IFC-Typ'},
  {name: 'IfcGUID', value: '0rqlGCnhrFtRgGu39lu_4Q'},
];

// rails: levels whose vertical line runs on below the row
const treeRows = [
  {level: 0, label: 'Ansichten (Gliederung 1 + 2)', icon: 'views', rails: []},
  {level: 1, label: 'ALLGEMEIN', rails: [0]},
  {level: 2, label: 'EBENEN', rails: [0]},
  {level: 3, label: 'Schnitt Name', rails: [0]},
  {level: 4, label: 'Schnitt: EBENEN IM PROJEKT', icon: 'viewBlue', rails: [0]},
  {level: 1, label: 'ARCHITEKTUR', rails: [0]},
  {level: 2, label: 'LPH 1', rails: [0]},
  {level: 3, label: 'Grundriss', rails: [0]},
  {level: 4, label: 'Grundriss: EG FBOK', icon: 'viewBox', rails: [0], current: true},
  {level: 1, label: 'MODELLIERSICHTEN', rails: [0]},
  {level: 2, label: '00 ISOMETRISCH', rails: [0, 1]},
  {level: 3, label: '3D-Ansicht', rails: [0, 1]},
  {level: 4, label: '3D-Ansicht: 3D - ARCH', icon: 'viewBox', rails: [0, 1, 3]},
  {level: 4, label: '3D-Ansicht: 3D - ING', icon: 'viewBox', rails: [0, 1, 3]},
  {level: 4, label: '3D-Ansicht: 3D EG', icon: 'viewBox', rails: [0, 1, 3]},
];

const STEP = 22;

const TreeGuide = ({level, rails}) => {
  const leaf = level === 4;
  const x = 9 + (level - 1) * STEP;
  const dash = {stroke: '#b8b8b8', strokeDasharray: '4 2', fill: 'none'};
  return (
    <Guide $w={leaf ? 117 : 28 + level * STEP} aria-hidden="true">
      {rails.map(r => <path key={r} d={`M${9 + r * STEP}.500 0V28`} {...dash}/>)}
      {level > 0 && <path d={`M${x}.500 0V14.500H${leaf ? 111 : x + 13}`} {...dash}/>}
      {!leaf && <path d={`M${4 + level * STEP} 13H${15 + level * STEP}`} stroke={g} strokeWidth="2"/>}
    </Guide>
  );
};

const TreeLabel = styled.span`
  margin-left: ${({$icon}) => $icon ? 5 : 0}px;
`;

const Palettes = () => (
  <Side>
    <Properties>
      <PaletteTitle><span/><IconButton $w={14} $h={18} aria-label="Schließen"><Icon name="close"/></IconButton></PaletteTitle>
      <TypeBox><Icon name="drop"/></TypeBox>
      <TypeRow><button><Icon name="typeEdit"/>Typ bearbeiten</button></TypeRow>
      <Props>
        <colgroup><col width="209"/><col width="210"/><col width="15"/></colgroup>
        <tbody>
          {propRows.map(({section, name, value, button}, i) => section ? (
            <SectionRow key={i}><th colSpan="3"><div><span>{section}</span><Icon name="chevrons"/></div></th></SectionRow>
          ) : (
            <tr key={i}><th scope="row">{name}</th><td>{value}</td><td>{button && <CellButton aria-label={name}/>}</td></tr>
          ))}
        </tbody>
      </Props>
      <PaletteFooter>
        <GroupButton $w={24} $h={25} aria-label="Gruppieren"><Icon name="sortGroup"/></GroupButton>
        <SortButton top="A" bottom="Z" first="first"/>
        <SortButton top="Z" bottom="A" first="last"/>
        <Apply>Anwenden</Apply>
      </PaletteFooter>
    </Properties>
    <Browser>
      <PaletteTitle><span>Projektbrowser - Projekt1</span><IconButton $w={14} $h={18} aria-label="Schließen"><Icon name="close"/></IconButton></PaletteTitle>
      <SearchBox><Icon name="search"/><input type="text" placeholder="Suchen" aria-label="Suchen"/></SearchBox>
      <TreeArea>
        <Tree>
          {treeRows.map(({level, label, icon, rails, current}) => (
            <TreeItem key={label} $current={current}>
              <TreeGuide level={level} rails={rails}/>
              {icon && <Icon name={icon}/>}
              <TreeLabel $icon={icon}>{label}</TreeLabel>
            </TreeItem>
          ))}
        </Tree>
        <VScroll><Icon name="arrowUp"/><Thumb/><Icon name="arrowDown"/></VScroll>
      </TreeArea>
    </Browser>
  </Side>
);

/* ---------- drawing view ---------- */

const View = styled.section`
  display: flex;
  flex-direction: column;
  min-width: 0;
  min-height: 0;
  background: #fdfeff;
`;

const ViewTabs = styled.div`
  display: flex;
  flex: none;
  height: 24px;
  background: #cbcbcb;
`;

const ViewTab = styled.button`
  ${row};
  flex: none;
  width: ${({$w}) => $w}px;
  padding: 0 6px;
  gap: 8px;
  white-space: nowrap;
  background: ${({$active}) => $active ? 'white' : 'transparent'};
  font-weight: ${({$active}) => $active ? 'bold' : 'normal'};

  svg:nth-of-type(2) {
    margin-left: auto;
  }
`;

const Canvas = styled.svg`
  display: block;
  flex: 1;
  width: 100%;
  min-height: 0;
`;

const Coord = styled.text`
  font: 23px 'Liberation Sans', Arial, sans-serif;
  fill: #e8b4e4;
  stroke: #6f2f80;
  stroke-width: 1px;
`;

const Parcel = styled.text`
  font: 30px 'Liberation Sans', Arial, sans-serif;
  fill: #c4ecb4;
  stroke: #2f5f38;
  stroke-width: 1px;
`;

const Measure = styled.text`
  font: bold 15px 'Liberation Sans', Arial, sans-serif;
  fill: #1d4aa6;
`;

const contours = [
  '1237,230 1296,240 1420,230',
  '1168,319 1266,355 1420,348 1580,342 1768,309 1945,311 2097,313 2407,357 2560,360',
  '1168,365 1256,396 1497,435 1818,518 1860,523 1996,537 2231,565 2501,554 2560,539',
  '1168,428 1193,433 1341,514 1470,609 1683,720 1785,767 1860,777 2016,795 2299,773 2525,701 2560,702',
  '1168,477 1214,488 1314,601 1406,720 1427,748 1551,831 1649,887 1860,956 2070,990 2242,959 2407,932 2560,821',
  '1168,624 1185,639 1231,720 1298,885 1345,985 1480,1083 1595,1132 1785,1161',
  '1168,694 1190,720 1240,850 1290,950 1350,1030 1464,1130 1510,1161',
  '1167,833 1180,867 1230,980 1290,1060 1365,1130 1412,1161',
  '1167,958 1180,998 1222,1130 1234,1161',
  '2214,1161 2300,1147 2450,1138 2560,1136',
];

const roads = [
  '1568,1161 1593,1153 1607,1133 1640,1040 1690,925 1712,880 1755,848 1812,836 1860,843 1914,853 2217,922 2342,942',
  '1709,1161 1702,1130 1722,1050 1762,950 1790,900 1835,881 1860,886 2146,937 2244,960',
];

const coords = [
  {x: 1731, y: 336, lines: ['x =', '21326.5316', 'y =', '193446.7801']},
  {x: 1448, y: 483, lines: ['x =', '21292.2654', 'y =', '193428.6087']},
  {x: 1341, y: 824, lines: ['x =', '21278.8204', 'y =', '193408.4871', 'Höhe = 1022,00']},
  {x: 2370, y: 995, lines: ['x =', '21387.1148', 'y =', '193388.2269', 'Höhe = 1022,00']},
];

const points = [[1548, 566], [1860, 402], [1427, 748], [2408, 932]];

const Drawing = () => (
  <Canvas viewBox="1165 228 1395 933" preserveAspectRatio="xMinYMin slice">
    <g fill="none" stroke="#b4b4b4" strokeWidth="1.300">
      {contours.map(p => <polyline key={p} points={p}/>)}
    </g>
    <g fill="none" stroke="#dadada" strokeWidth="1.300">
      {roads.map(p => <polyline key={p} points={p}/>)}
    </g>
    <path d="M2342 942L2391 950L2463 953L2560 954M2244 960L2387 995H2560" fill="none" stroke="#bdb4b0" strokeWidth="1.300"/>
    <g fill="none" stroke="#e4ece2" strokeWidth="1.500">
      <path d="M1352 230L1548 566M1861 401L2533 231M2408 262L2560 437M1427 748L1860 830L2407 932"/>
    </g>
    <path d="M1168 647L1427 748M2420 932L2560 930M1167 1128L1216 1161" stroke="#c2e0bb" strokeWidth="1.500" fill="none"/>
    <g fill="none" stroke="#f3cfe2">
      {points.map(([x, y]) => (
        <path key={x} transform={`translate(${x} ${y})`} d="M-9 -27H9L23 -17L28 0L23 17L9 27H-9L-23 17L-28 0L-23 -17Z"/>
      ))}
    </g>
    {coords.map(({x, y, lines}) => (
      <g key={x}>
        {lines.map((line, i) => <Coord key={i} x={x} y={y + i * 26}>{line}</Coord>)}
      </g>
    ))}
    <Parcel x="1169" y="513">850</Parcel>
    <Parcel x="1789" y="649">849</Parcel>
    <Parcel x="2207" y="482">848</Parcel>
    <g fill="#a9a9a9">
      <path d="M1545 461L1551 465L1545 469ZM1555 460H1557V470H1555ZM2272 461L2266 464L2272 468ZM1928 708L1932 702L1936 708ZM1928 695H1931V697H1928ZM1933 695H1936V697H1933ZM2259 461H2261V468H2259Z"/>
    </g>
    <path d="M1427 748L1446 720L1548 566L1861 401" fill="none" stroke="#fb6060" strokeWidth="1.800"/>
    <path d="M1861 402H2236" stroke="#9c9c9c" strokeWidth="2"/>
    <path d="M1861 401L1893 366L2442 897L2412 930M2048 402L2042 449L2024 494L1995 532M1888 366H1899M1889 371L1898 362M2436 897H2448M2437 902L2447 892M2044 398L2052 406" fill="none" stroke="#a3bdea" strokeWidth="1.500"/>
    <path d="M1861 402L2405 930" stroke="#5c5cb4" strokeWidth="3"/>
    <Measure transform="translate(2018 485) rotate(-67)">44,02°</Measure>
    <Measure transform="translate(2152 606) rotate(44)">84,2543 m</Measure>
    <rect x="2401" y="924" width="16" height="16" fill="none" stroke="#a3439f" strokeWidth="2"/>
    <path d="M2412 914V940M2399 928H2426" stroke="#333" strokeWidth="1.500"/>
  </Canvas>
);

const ViewBar = styled.div`
  ${row};
  flex: none;
  height: 23px;
  padding-bottom: 3px;
  background: white;
`;

const ViewControls = styled.div`
  ${row};
  align-self: stretch;
  flex: none;
  width: 449px;
  background: #f4f4f4;
`;

const Scale = styled.button`
  flex: none;
  width: 95px;
  padding-right: 25px;
  text-align: right;
`;

const HScroll = styled.div`
  ${row};
  flex: 1;
  align-self: stretch;
  background: #e6e6e6;
  padding-left: 650px;

  &::before {
    content: '';
    width: 22px;
    height: 11px;
    border-radius: 4px;
    background: #8d8d8d;
  }
`;

const StatusBar = styled.footer`
  ${row};
  flex: none;
  height: 29px;
  background: #f4f4f4;
  border-bottom: 2px solid #b5c2c6;
  white-space: pre;
`;

const StatusText = styled.span`
  flex: none;
  width: ${({$w}) => $w}px;
  padding-left: ${({$dim}) => $dim ? 3 : 0}px;
  color: ${({$dim}) => $dim ? '#a0a0a0' : 'inherit'};
`;

const Status = () => (
  <StatusBar>
    <StatusText $w={988}>{'ENDPUNKT von [Lageplan.dwg : Importiertes Symbol : Position DefaultLocation].  (SZ), um die Schleife zu schließen.'}</StatusText>
    <IconButton aria-label="Auswahl"><Icon name="hand"/></IconButton>
    <StatusText $w={229}/>
    <IconButton $w={18} aria-label="Bearbeitungsbereich"><Icon name="chevron"/></IconButton>
    <StatusText $w={10}/>
    <IconButton $w={18} aria-label="Anfragen"><Icon name="press"/></IconButton>
    <StatusText $w={34} $dim>:0</StatusText>
    <IconButton $w={32} aria-label="Varianten"><Icon name="list"/></IconButton>
    <IconButton $w={32} aria-label="Variante"><Icon name="listPin"/></IconButton>
    <StatusText $w={226} $dim>{' Basisvorlage'}</StatusText>
    <IconButton $w={18} aria-label="Variante wählen"><Icon name="chevron"/></IconButton>
  </StatusBar>
);

const viewTools = ['detail', 'style', 'sun', 'shadow', 'cropOff', 'crop', 'glasses', 'reveal', 'temp', 'analytic', 'constraint'];

/* ---------- magnified callout ---------- */

const Callout = styled.section`
  position: absolute;
  top: 0;
  left: 0;
  width: 1030px;
  height: 399px;
  display: flex;
  flex-direction: column;
  border: 4px solid ${theme.orange};
  background: #f2f8fa;
  font-size: 22px;
`;

const CalloutTitle = styled.div`
  flex: none;
  height: 54px;
  padding-right: 45px;
  text-align: right;
  background: ${theme.bar};
`;

const CalloutTabs = styled.div`
  display: flex;
  flex: none;
  height: 39px;
  padding-left: 16px;
  gap: 41px;
  background: ${theme.bar};

  button {
    height: 39px;
    padding-bottom: 2px;
  }

  button:first-child {
    width: 326px;
    margin-right: -20px;
    padding-right: 3px;
    background: ${theme.panel};
  }
`;

const CalloutRibbon = styled.div`
  display: flex;
  flex: none;
  height: 188px;
  background: ${theme.panel};
  border-bottom: 2px solid #dedede;
`;

const CalloutGroup = styled.div`
  display: flex;
  flex-direction: column;
  margin: 3px 0 2px;
  padding: 0 ${({$right}) => $right || 0}px 0 ${({$left}) => $left || 0}px;
  border-left: 2px solid ${({$plain}) => $plain ? 'transparent' : '#e2e2e2'};
`;

const BigTool = styled.button`
  display: flex;
  flex-direction: column;
  align-items: center;
  width: ${({$w}) => $w}px;
  height: 147px;
  padding-top: 10px;
  line-height: 30px;
  white-space: pre-line;
  background: ${({$hover}) => $hover ? '#dcdcdc' : 'transparent'};

  > span:first-child {
    height: 67px;
    line-height: 0;
  }
`;

const CalloutLabel = styled.div`
  ${row};
  justify-content: center;
  gap: 12px;
  height: 32px;
`;

const ElevationMark = styled.span`
  display: block;
  position: relative;
  width: 56px;
  height: 56px;
  font-size: 26px;
  font-weight: 300;
  line-height: 56px;

  svg {
    position: absolute;
    inset: 0;
  }
`;

const CalloutOptions = styled.div`
  flex: none;
  height: 52px;
  background: ${theme.panel};
`;

const CalloutViews = styled.div`
  ${row};
  flex: none;
  height: 43px;
  background: #cbcbcb;
  border-top: 3px solid #c0c0c0;
`;

const CalloutView = styled.button`
  ${row};
  align-self: stretch;
  gap: ${({$gap}) => $gap || 14}px;
  width: ${({$w}) => $w}px;
  padding: 0 10px 0 8px;
  background: ${({$active}) => $active ? 'white' : 'transparent'};
  font-weight: ${({$active}) => $active ? 'bold' : 'normal'};

  svg:nth-of-type(2) {
    margin-left: auto;
  }
`;

const CalloutGap = styled.div`
  height: 4px;
  background: white;
`;

const RibbonCallout = () => (
  <Callout>
    <CalloutTitle>Autodesk Revit 2024.3 - Projekt1 - Grundriss: EG FBOK</CalloutTitle>
    <CalloutTabs>
      <button>Körpermodell &amp; Grundstück</button>
      <button>Zusammenarbeit</button>
      <button>Ansicht</button>
      <button>Verwalten</button>
      <button>Zusatzmodule</button>
    </CalloutTabs>
    <CalloutRibbon>
      <CalloutGroup $plain $right={10}>
        <BigTool $w={8}><span/>e</BigTool>
      </CalloutGroup>
      <CalloutGroup $left={6} $right={4}>
        <Line $h={147}>
          <BigTool $w={284}><span><Icon name="toposolid"/></span>Geländevolumenkörper<Icon name="dropMid"/></BigTool>
          <BigTool $w={88}><span><Icon name="tree"/></span>{'Außen-\nbauteil'}</BigTool>
          <BigTool $w={78}><span><Icon name="parking"/></span>{'Park-\nplatz'}</BigTool>
          <BigTool $w={210} $hover><span><Icon name="boundary"/></span>Grundstücksgrenze</BigTool>
          <BigTool $w={138}>
            <span><ElevationMark>50<svg width="56" height="56"><path d="M42 15L55 2M1 55L14 42" stroke={g} strokeWidth="1.600"/></svg></ElevationMark></span>
            {'Höhenlinien\nbeschriften'}
          </BigTool>
        </Line>
        <CalloutLabel>Grundstück modellieren<Icon name="dropBig"/></CalloutLabel>
      </CalloutGroup>
      <CalloutGroup>
        <BigTool $w={180}><span><Icon name="surveyed"/></span>{'Eingemessenes\nGelände'}</BigTool>
        <CalloutLabel>Analyse</CalloutLabel>
      </CalloutGroup>
    </CalloutRibbon>
    <CalloutOptions/>
    <CalloutViews>
      <CalloutView $w={227}>00_EBENENLISTE</CalloutView>
      <CalloutView $w={250} $active><Icon name="planBig"/>EG FBOK<Icon name="closeBig"/></CalloutView>
      <CalloutView $w={200} $gap={18}>
        <svg width="30" height="30" viewBox="0 0 20 20" aria-hidden="true">{icons.houseGrey[2]}</svg>
        {'{3D}'}
      </CalloutView>
    </CalloutViews>
    <CalloutGap/>
  </Callout>
);

/* ---------- arrows and frames over the window ---------- */

const Marks = styled.svg`
  position: absolute;
  top: 0;
  left: 0;
  width: 100%;
  height: 100%;
  pointer-events: none;
`;

const Annotations = () => (
  <Marks aria-hidden="true">
    <path d="M656 229V259L663 253L669 267L675 264L669 250H679Z" fill="white" stroke="black" strokeWidth="1.500"/>
    <path d="M669 224H679M674 219V229" stroke="black" strokeWidth="2"/>
    <g fill="none" stroke={theme.orange} strokeWidth="4">
      <rect x="18" y="49" width="337" height="62"/>
      <rect x="482" y="100" width="207" height="147"/>
      <rect x="1841" y="30" width="270" height="157"/>
      <rect x="2339" y="873" width="140" height="114"/>
    </g>
    <path d="M174 113L455 168M691 173L1815 99M1963 189L1879 352" stroke={theme.arrow} strokeWidth="4"/>
    <path d="M480 173L452 178L456 159ZM1839 98L1812 109V90ZM1867 376L1870 347L1888 356Z" fill={theme.arrow}/>
  </Marks>
);

const App = () => (
  <>
    <GlobalStyle/>
    <Page>
      <Window>
        <TitleBar>
          <IconButton aria-label="Bemaßung fixieren"><Icon name="pinDim"/></IconButton>
          <Divider/>
          <IconButton aria-label="Messen"><Icon name="ruler"/></IconButton>
          <IconButton $w={14} aria-label="Messen Optionen"><Icon name="drop"/></IconButton>
          <IconButton aria-label="Ausgerichtete Bemaßung"><Icon name="diag"/></IconButton>
          <IconButton aria-label="Beschriftung"><Icon name="tag"/></IconButton>
          <IconButton aria-label="Text"><Icon name="letter"/></IconButton>
          <Divider/>
          <IconButton aria-label="3D-Ansicht"><Icon name="house"/></IconButton>
          <IconButton $w={14} aria-label="3D Optionen"><Icon name="drop"/></IconButton>
          <IconButton aria-label="Schnitt"><Icon name="section"/></IconButton>
          <IconButton $on aria-label="Dünne Linien"><Icon name="thinLines"/></IconButton>
          <Divider/>
          <IconButton aria-label="Inaktive Ansichten schließen"><Icon name="closeViews"/></IconButton>
          <IconButton aria-label="Fenster wechseln"><Icon name="switchViews"/></IconButton>
          <IconButton $w={14} aria-label="Fenster"><Icon name="drop"/></IconButton>
          <IconButton $w={20} aria-label="Anpassen"><Icon name="more"/></IconButton>
          <WindowTitle>Autodesk Revit 2024.3 - Projekt1 - Grundriss: EG FBOK</WindowTitle>
        </TitleBar>
        <TabStrip>
          {tabs.map((label, i) => <Tab key={label} $active={i === tabs.length - 1}>{label}</Tab>)}
        </TabStrip>
        <Ribbon/>
        <OptionsBar>
          <label htmlFor="radius">Radius:</label>
          <input id="radius" type="text" defaultValue="1,0000 m"/>
        </OptionsBar>
        <Work>
          <Palettes/>
          <View>
            <ViewTabs>
              <ViewTab $w={174}><Icon name="sheet"/>LPH1 - STARTSEITE</ViewTab>
              <ViewTab $w={190}><Icon name="section"/>EBENEN IM PROJEKT</ViewTab>
              <ViewTab $w={164}><Icon name="schedule"/>00_EBENENLISTE</ViewTab>
              <ViewTab $w={151} $active><Icon name="plan"/>EG FBOK<Icon name="close"/></ViewTab>
              <ViewTab $w={120}><Icon name="houseGrey"/>{'{3D}'}</ViewTab>
            </ViewTabs>
            <Drawing/>
            <ViewBar>
              <ViewControls>
                <Scale>1 : 100</Scale>
                {viewTools.map(name => <IconButton key={name} $w={30} $h={20} aria-label={name}><Icon name={name}/></IconButton>)}
                <IconButton $w={24} $h={20} aria-label="Zurück"><Icon name="left"/></IconButton>
              </ViewControls>
              <HScroll/>
            </ViewBar>
          </View>
        </Work>
        <Status/>
      </Window>
      <RibbonCallout/>
      <Annotations/>
    </Page>
  </>
);

export default App;
